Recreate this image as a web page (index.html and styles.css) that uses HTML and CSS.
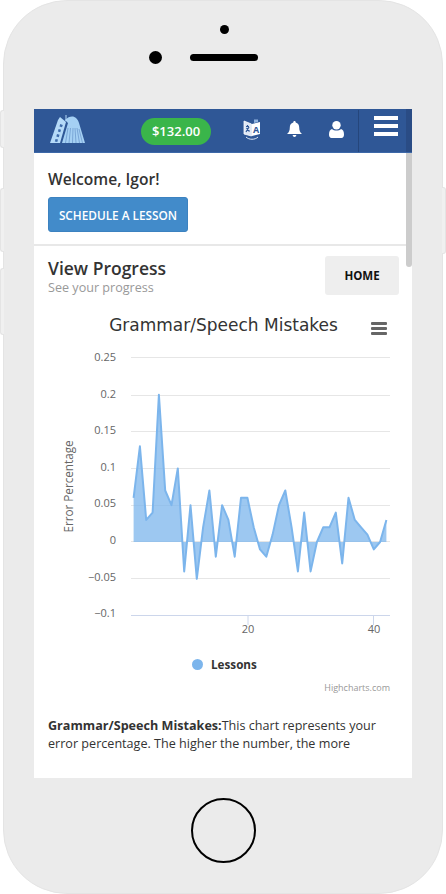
FILE: index.html
```html
<!DOCTYPE html>
<html lang="en">
<head>
    <meta charset="utf-8" />
    <title>View Progress</title>
    <link rel="stylesheet" href="styles.css">
</head>
<body>
    <div class="side_btn side_left side_a"></div>
    <div class="side_btn side_left side_b"></div>
    <div class="side_btn side_left side_c"></div>
    <div class="side_btn side_right side_d"></div>

    <div class="phone">
        <div class="sensor"></div>
        <div class="cam_row">
            <div class="camera"></div>
            <div class="speaker"></div>
        </div>

        <div class="screen">
            <div class="header">
                <svg class="logo" viewBox="0 0 35 29">
                    <polygon points="0,29 8,6 10,3 16,8 10,29" fill="#b5daf8" />
                    <g fill="#3f6cab">
                        <polygon points="5.5,25 8,25.5 7.3,28 4.8,27.6" />
                        <polygon points="7,20 9.5,20.7 8.8,23.2 6.3,22.6" />
                        <polygon points="8.6,15 11,15.8 10.3,18.2 7.9,17.5" />
                        <polygon points="10.2,10 12.8,11 12,13.3 9.5,12.5" />
                    </g>
                    <path d="M15 6 C21 0 27 2 29 9 L35 29 L12 29 L18 9 Z" fill="#a5d0f4" />
                    <g stroke="#4f7db8" stroke-width="0.5" fill="none">
                        <path d="M18 14 L15.5 29" />
                        <path d="M20.5 14 L19 29" />
                        <path d="M23 14 L22.5 29" />
                        <path d="M25 14 L26 29" />
                        <path d="M27 14 L29.5 29" />
                        <path d="M29 15 L32.5 29" />
                    </g>
                    <path d="M16 7 L16 1" stroke="#b5daf8" stroke-width="1" />
                </svg>
                <div class="balance">$132.00</div>
                <svg class="ic_translate" viewBox="0 0 18 21">
                    <path d="M1 2 L8.5 5 L8.5 17 L1 15 Z" fill="#dfe8f5" stroke="#fff" stroke-width="0.8" />
                    <path d="M9 5 L17 3 L17 15 L9 17 Z" fill="#fff" />
                    <path d="M11 0.5 L15 0.5 L15 3 L11 4 Z" fill="#8fb2de" />
                    <path d="M3 7.5 h3 M4.5 6 v1.5 M6 8 L3 13 M3.5 9 L6.5 12.5" stroke="#2f5796" stroke-width="1.2" fill="none" />
                    <text class="ic_letter" x="13" y="13.5" text-anchor="middle">A</text>
                    <path d="M3 18 C6 21 12 21 15 18" stroke="#dfe8f5" stroke-width="1" fill="none" />
                </svg>
                <svg class="ic_bell" viewBox="0 0 15 16">
                    <path d="M7.5 0 C8.3 0 8.8 .6 8.7 1.5 C11 2 12.2 4 12.2 6.5 C12.2 9.5 13 11.3 15 13 L0 13 C2 11.3 2.8 9.5 2.8 6.5 C2.8 4 4 2 6.3 1.5 C6.2 .6 6.7 0 7.5 0 Z M5.6 14 L9.4 14 C9.2 15.3 8.4 16 7.5 16 C6.6 16 5.8 15.3 5.6 14 Z" fill="#fff" />
                </svg>
                <svg class="ic_user" viewBox="0 0 15 17">
                    <circle cx="7.5" cy="4.2" r="4.2" fill="#fff" />
                    <path d="M3 8 C5 10 10 10 12 8 C14 8.5 15 10.5 15 13.5 C15 15.8 14 17 12.5 17 L2.5 17 C1 17 0 15.8 0 13.5 C0 10.5 1 8.5 3 8 Z" fill="#fff" />
                </svg>
                <div class="head_divider"></div>
                <div class="burger">
                    <span></span>
                    <span></span>
                    <span></span>
                </div>
                <div class="head_edge"></div>
            </div>

            <div class="welcome">
                <h2>Welcome, Igor!</h2>
                <a class="btn_schedule">SCHEDULE A LESSON</a>
            </div>

            <div class="progress_head">
                <div>
                    <h1>View Progress</h1>
                    <p>See your progress</p>
                </div>
                <a class="btn_home">HOME</a>
            </div>

            <svg class="chart" viewBox="34 305 372 398">
                <text class="ch_title" x="223.5" y="331" text-anchor="middle">Grammar/Speech Mistakes</text>
                <g fill="#666">
                    <rect x="371" y="322" width="16" height="3" rx="1" />
                    <rect x="371" y="327" width="16" height="3" rx="1" />
                    <rect x="371" y="332" width="16" height="3" rx="1" />
                </g>

                <g stroke="#e6e6e6" stroke-width="1">
                    <path d="M131 357.5 H390" />
                    <path d="M131 395.5 H390" />
                    <path d="M131 431.5 H390" />
                    <path d="M131 468.5 H390" />
                    <path d="M131 505.5 H390" />
                    <path d="M131 541.5 H390" />
                    <path d="M131 578.5 H390" />
                </g>
                <path d="M131 615.5 H390 M248 615 V625 M373.5 615 V625" stroke="#ccd6eb" stroke-width="1" fill="none" />

                <g class="ch_label" text-anchor="end">
                    <text x="116" y="361">0.25</text>
                    <text x="116" y="398">0.2</text>
                    <text x="116" y="434">0.15</text>
                    <text x="116" y="471">0.1</text>
                    <text x="116" y="507">0.05</text>
                    <text x="116" y="544">0</text>
                    <text x="116" y="581">−0.05</text>
                    <text x="116" y="617">−0.1</text>
                </g>
                <g class="ch_label" text-anchor="middle">
                    <text x="248" y="633">20</text>
                    <text x="374" y="633">40</text>
                </g>
                <text class="ch_axis" transform="translate(73 486.5) rotate(-90)" text-anchor="middle">Error Percentage</text>

                <polygon fill="#7cb5ec" fill-opacity="0.75" points="133.6,542 133.6,497.8 139.9,446.3 146.2,519.9 152.6,512.6 158.9,394.8 165.2,490.5 171.5,505.2 177.8,468.4 184.2,571.4 190.5,505.2 196.8,578.8 203.1,527.3 209.4,490.5 215.8,556.7 222.1,505.2 228.4,519.9 234.7,556.7 241,497.8 247.4,497.8 253.7,527.3 260,549.4 266.3,556.7 272.6,534.6 279,505.2 285.3,490.5 291.6,527.3 297.9,571.4 304.2,512.6 310.6,571.4 316.9,542 323.2,527.3 329.5,527.3 335.8,512.6 342.2,563.5 348.5,497.8 354.8,519.9 361.1,527.3 367.4,534.6 373.8,549.4 380.1,542 386.4,519.9 386.4,542" />
                <polyline fill="none" stroke="#7cb5ec" stroke-width="2" stroke-linejoin="round" points="133.6,497.8 139.9,446.3 146.2,519.9 152.6,512.6 158.9,394.8 165.2,490.5 171.5,505.2 177.8,468.4 184.2,571.4 190.5,505.2 196.8,578.8 203.1,527.3 209.4,490.5 215.8,556.7 222.1,505.2 228.4,519.9 234.7,556.7 241,497.8 247.4,497.8 253.7,527.3 260,549.4 266.3,556.7 272.6,534.6 279,505.2 285.3,490.5 291.6,527.3 297.9,571.4 304.2,512.6 310.6,571.4 316.9,542 323.2,527.3 329.5,527.3 335.8,512.6 342.2,563.5 348.5,497.8 354.8,519.9 361.1,527.3 367.4,534.6 373.8,549.4 380.1,542 386.4,519.9" />

                <circle cx="197.5" cy="664.5" r="5.5" fill="#7cb5ec" />
                <text class="ch_legend" x="211" y="669">Lessons</text>
                <text class="ch_credit" x="390" y="691" text-anchor="end">Highcharts.com</text>
            </svg>

            <p class="chart_note"><b>Grammar/Speech Mistakes:</b><span>This chart represents your</span><br />
                <span>error percentage. The higher the number, the more</span></p>

            <div class="scroll_thumb"></div>
        </div>

        <div class="home_btn"></div>
    </div>
</body>
</html>
```

FILE: styles.css
```css
body {
    margin: 0;
    background-color: #ffffff;
    font: 13px "Open Sans", sans-serif;
    color: #333333;
}

h1,
h2,
p {
    margin: 0;
}

.phone {
    width: 440px;
    height: 894px;
    margin-left: 3px;
    box-sizing: border-box;
    background-color: #ebebeb;
    border: 1px solid #e4e4e4;
    border-radius: 64px;
    display: flex;
    flex-direction: column;
    align-items: center;
}

.side_btn {
    position: absolute;
    width: 4px;
    background-color: #f0f0f0;
    border: 1px solid #e4e4e4;
    box-sizing: border-box;
}

.side_left {
    left: 0;
    border-right: 0;
    border-radius: 3px 0 0 3px;
}

.side_right {
    left: 442px;
    border-left: 0;
    border-radius: 0 3px 3px 0;
}

.side_a {
    top: 110px;
    height: 38px;
}

.side_b {
    top: 188px;
    height: 64px;
}

.side_c {
    top: 268px;
    height: 67px;
}

.side_d {
    top: 187px;
    height: 67px;
}

.sensor {
    width: 9px;
    height: 9px;
    margin: 24px 0 0 3px;
    border-radius: 50%;
    background-color: #000000;
}

.cam_row {
    width: 378px;
    height: 13px;
    margin-top: 17px;
    padding-left: 115px;
    box-sizing: border-box;
    display: flex;
    align-items: center;
    gap: 28px;
}

.camera {
    width: 13px;
    height: 13px;
    border-radius: 50%;
    background-color: #000000;
}

.speaker {
    width: 68px;
    height: 7px;
    border-radius: 4px;
    background-color: #000000;
}

.screen {
    position: relative;
    width: 378px;
    height: 669px;
    margin-top: 45px;
    flex: none;
    overflow: hidden;
    background-color: #ffffff;
}

.header {
    position: relative;
    height: 44px;
    box-sizing: border-box;
    padding-left: 16px;
    background-color: #2f5796;
    border-bottom: 1px solid #3d68a8;
    display: flex;
    align-items: center;
}

.logo {
    width: 35px;
    height: 29px;
    margin-top: -5px;
    flex: none;
}

.balance {
    width: 70px;
    height: 27px;
    margin: 2px 0 0 56px;
    flex: none;
    border-radius: 14px;
    background-color: #3ab54a;
    color: #ffffff;
    font-size: 13px;
    font-weight: 600;
    line-height: 27px;
    text-align: center;
}

.ic_translate {
    width: 18px;
    height: 21px;
    margin: -3px 0 0 32px;
    flex: none;
}

.ic_letter {
    font: bold 9px "Open Sans", sans-serif;
    fill: #2f5796;
}

.ic_bell {
    width: 15px;
    height: 16px;
    margin: -3px 0 0 26px;
    flex: none;
}

.ic_user {
    width: 15px;
    height: 17px;
    margin: -2px 0 0 27px;
    flex: none;
}

.head_divider {
    width: 1px;
    height: 42px;
    margin-left: 14px;
    flex: none;
    background-color: #25467c;
}

.burger {
    width: 24px;
    margin: -10px 0 0 15px;
    flex: none;
    display: flex;
    flex-direction: column;
    gap: 4px;
}

.burger span {
    height: 4px;
    background-color: #ffffff;
}

.head_edge {
    position: absolute;
    top: 0;
    right: 0;
    bottom: 0;
    width: 6px;
    background-color: #2a4c85;
}

.welcome {
    height: 93px;
    box-sizing: border-box;
    padding: 16px 14px 0;
    border-bottom: 2px solid #e8e8e8;
}

.welcome h2 {
    font-size: 15.6px;
    font-weight: 600;
    line-height: 20px;
}

.btn_schedule {
    display: block;
    width: 140px;
    height: 35px;
    margin-top: 8px;
    box-sizing: border-box;
    background-color: #428bca;
    border: 1px solid #3c82c0;
    border-radius: 3px;
    color: #ffffff;
    font-size: 11.8px;
    font-weight: 600;
    line-height: 35px;
    text-align: center;
}

.progress_head {
    padding: 10px 13px 0 14px;
    display: flex;
    justify-content: space-between;
}

.progress_head h1 {
    margin-top: 1px;
    font-size: 17.5px;
    font-weight: 600;
    line-height: 22px;
}

.progress_head p {
    color: #999999;
    font-size: 12.6px;
    line-height: 18px;
}

.btn_home {
    width: 74px;
    height: 39px;
    background-color: #eeeeee;
    border-radius: 3px;
    color: #111111;
    font-size: 11.5px;
    font-weight: 700;
    line-height: 39px;
    text-align: center;
}

.chart {
    display: block;
    width: 372px;
    height: 398px;
    margin-top: 8px;
}

.ch_title {
    font: 17px "DejaVu Sans", sans-serif;
    fill: #333333;
}

.ch_label {
    font: 11px "Open Sans", sans-serif;
    fill: #666666;
}

.ch_axis {
    font: 11.7px "Open Sans", sans-serif;
    fill: #666666;
}

.ch_legend {
    font: 700 11.7px "Open Sans", sans-serif;
    fill: #333333;
}

.ch_credit {
    font: 9px "Open Sans", sans-serif;
    fill: #999999;
}

.chart_note {
    padding: 14px 20px 0 14px;
    font-size: 12.6px;
    line-height: 18px;
}

.scroll_thumb {
    position: absolute;
    top: 44px;
    right: 0;
    width: 6px;
    height: 114px;
    background-color: #cccccc;
    border-radius: 0 0 3px 3px;
}

.home_btn {
    width: 65px;
    height: 65px;
    margin-top: 20px;
    box-sizing: border-box;
    border: 2px solid #000000;
    border-radius: 50%;
}
```
